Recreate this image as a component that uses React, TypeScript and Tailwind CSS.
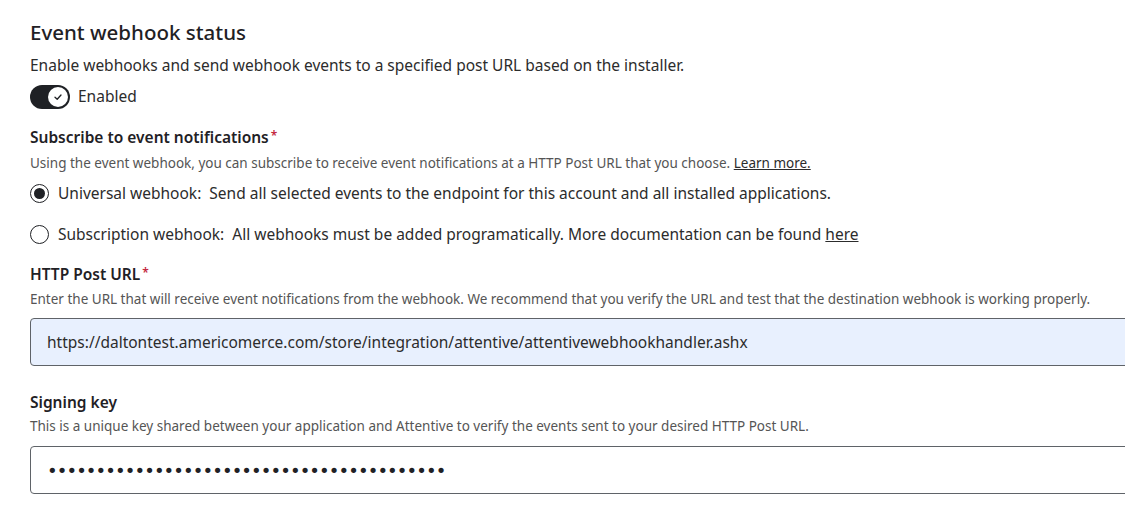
import { useState } from 'react';

const font = { fontFamily: '"Noto Sans", "Open Sans", sans-serif' };

function Toggle({ on, onChange }: { on: boolean; onChange: (v: boolean) => void }) {
  return (
    <button
      onClick={() => onChange(!on)}
      className={`relative flex h-[24px] w-[40px] items-center rounded-full ${on ? 'bg-[#1f2125]' : 'bg-[#9aa0a6]'}`}
    >
      <span
        className={`absolute top-[2px] flex h-[20px] w-[20px] items-center justify-center rounded-full bg-white ${on ? 'left-[18px]' : 'left-[2px]'}`}
      >
        {on && (
          <svg width="10" height="10" viewBox="0 0 10 10" fill="none">
            <path d="M2 5.2 4.2 7.3 8 3" stroke="#1f2125" strokeWidth="1.3" strokeLinecap="round" strokeLinejoin="round" />
          </svg>
        )}
      </span>
    </button>
  );
}

function Radio({ checked, onClick, children }: { checked: boolean; onClick: () => void; children: React.ReactNode }) {
  return (
    <label className="flex cursor-pointer items-center gap-[9px]" onClick={onClick}>
      <span className="flex h-[19px] w-[19px] items-center justify-center rounded-full border-[1.5px] border-[#1f2125] bg-white">
        {checked && <span className="h-[11px] w-[11px] rounded-full bg-[#1f2125]" />}
      </span>
      <span className="text-[15.5px] leading-[20px] text-[#2c2c2c]">{children}</span>
    </label>
  );
}

function Label({ text, required }: { text: string; required?: boolean }) {
  return (
    <div className="text-[15.5px] font-semibold leading-[20px] text-[#1f2125]">
      {text}
      {required && <span className="relative -top-[3px] ml-[2px] text-[12px] text-[#c4283f]">*</span>}
    </div>
  );
}

export default function App() {
  const [enabled, setEnabled] = useState(true);
  const [mode, setMode] = useState<'universal' | 'subscription'>('universal');

  return (
    <div className="h-[514px] w-full overflow-hidden bg-white pl-[30px]" style={font}>
      <h2 className="pt-[19px] text-[20.5px] font-medium leading-[26px] text-[#1f2125]">Event webhook status</h2>

      <p className="mt-[10px] text-[15.5px] leading-[20px] text-[#2c2c2c]">
        Enable webhooks and send webhook events to a specified post URL based on the installer.
      </p>

      <div className="mt-[10px] flex items-center gap-[8px]">
        <Toggle on={enabled} onChange={setEnabled} />
        <span className="text-[15.5px] text-[#2c2c2c]">{enabled ? 'Enabled' : 'Disabled'}</span>
      </div>

      <div className="mt-[18px]">
        <Label text="Subscribe to event notifications" required />
        <p className="mt-[5px] text-[13.5px] leading-[18px] text-[#555]">
          Using the event webhook, you can subscribe to receive event notifications at a HTTP Post URL that you choose.{' '}
          <a href="#" className="text-[#2c2c2c] underline">Learn more.</a>
        </p>
      </div>

      <div className="mt-[11px] flex flex-col gap-[21px]">
        <Radio checked={mode === 'universal'} onClick={() => setMode('universal')}>
          Universal webhook:&nbsp; Send all selected events to the endpoint for this account and all installed applications.
        </Radio>
        <Radio checked={mode === 'subscription'} onClick={() => setMode('subscription')}>
          Subscription webhook:&nbsp; All webhooks must be added programatically. More documentation can be found{' '}
          <a href="#" className="underline">here</a>
        </Radio>
      </div>

      <div className="mt-[20px]">
        <Label text="HTTP Post URL" required />
        <p className="mt-[4px] text-[13.5px] leading-[18px] text-[#555]">
          Enter the URL that will receive event notifications from the webhook. We recommend that you verify the URL and test that the destination webhook is working properly.
        </p>
        <input
          defaultValue="https://daltontest.americomerce.com/store/integration/attentive/attentivewebhookhandler.ashx"
          className="mt-[10px] h-[48px] w-[1120px] rounded-[4px] border border-[#5f6368] bg-[#e8f0fe] px-[16px] text-[15.5px] text-[#2c2c2c] outline-none"
        />
      </div>

      <div className="mt-[26px]">
        <Label text="Signing key" />
        <p className="mt-[5px] text-[13.5px] leading-[18px] text-[#555]">
          This is a unique key shared between your application and Attentive to verify the events sent to your desired HTTP Post URL.
        </p>
        <input
          type="password"
          defaultValue="abcdefghijklmnopqrstuvwxyz0123456789abcde"
          className="mt-[11px] h-[48px] w-[1120px] rounded-[4px] border border-[#5f6368] bg-white px-[16px] text-[18px] tracking-[-0.9px] text-[#1f2125] outline-none"
          style={{ fontFamily: '"DejaVu Sans", sans-serif' }}
        />
      </div>
    </div>
  );
}
